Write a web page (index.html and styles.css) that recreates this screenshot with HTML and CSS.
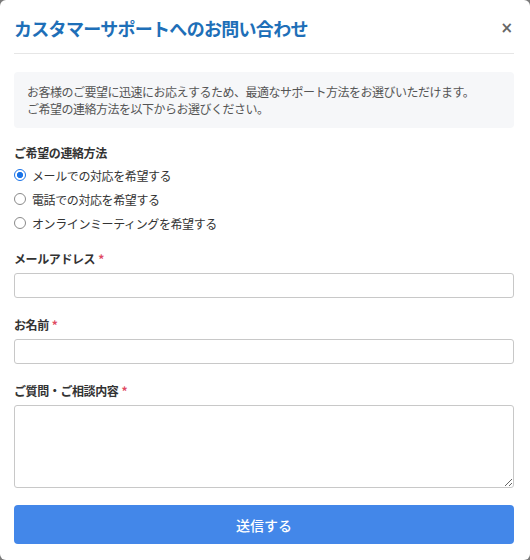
FILE: index.html
```html
<!DOCTYPE html>
<html lang="ja">
<head>
<meta charset="utf-8">
<title>カスタマーサポートへのお問い合わせ</title>
<link rel="stylesheet" href="styles.css">
</head>
<body>
<div class="modal">
  <div class="modal-header">
    <h1 class="modal-title">カスタマーサポートへのお問い合わせ</h1>
    <button class="close" type="button" aria-label="閉じる">×</button>
  </div>
  <div class="info">
    お客様のご要望に迅速にお応えするため、最適なサポート方法をお選びいただけます。<br>
    ご希望の連絡方法を以下からお選びください。
  </div>
  <form class="form">
    <fieldset class="group">
      <legend class="label">ご希望の連絡方法</legend>
      <label class="radio radio-first"><input type="radio" name="method" checked><span>メールでの対応を希望する</span></label>
      <label class="radio"><input type="radio" name="method"><span>電話での対応を希望する</span></label>
      <label class="radio"><input type="radio" name="method"><span>オンラインミーティングを希望する</span></label>
    </fieldset>
    <div class="field field-first">
      <label class="label">メールアドレス<span class="req">*</span></label>
      <input class="input" type="email">
    </div>
    <div class="field">
      <label class="label">お名前<span class="req">*</span></label>
      <input class="input" type="text">
    </div>
    <div class="field">
      <label class="label">ご質問・ご相談内容<span class="req">*</span></label>
      <textarea class="textarea"></textarea>
    </div>
    <button class="submit" type="button">送信する</button>
  </form>
</div>
</body>
</html>
```
FILE: styles.css
```css
html, body {
  margin: 0;
  padding: 0;
  background: #7a7a7a;
}
body {
  font-family: "Noto Sans CJK JP", "Noto Sans", sans-serif;
  color: #333;
}
.modal {
  box-sizing: border-box;
  width: 530px;
  height: 560px;
  background: #fff;
  border-radius: 6px;
  padding: 0 16px 0 14px;
  overflow: hidden;
}
.modal-header {
  display: flex;
  align-items: center;
  justify-content: space-between;
  padding: 15px 0 12px;
  border-bottom: 1px solid #e6e6e6;
}
.modal-title {
  margin: 0;
  font-size: 18px;
  line-height: 26px;
  font-weight: 700;
  color: #1e6fb8;
  letter-spacing: -0.7px;
}
.close {
  border: 0;
  background: none;
  padding: 0;
  margin-right: 1px;
  font-size: 15px;
  line-height: 20px;
  font-weight: 700;
  color: #666;
  font-family: "DejaVu Sans", sans-serif;
}
.info {
  margin-top: 18px;
  background: #f6f7f9;
  border-radius: 4px;
  padding: 11px 13px;
  font-size: 12px;
  line-height: 17px;
  color: #555;
  letter-spacing: -0.5px;
}
.form {
  display: flex;
  flex-direction: column;
  margin-top: 16px;
}
.group {
  border: 0;
  margin: 0;
  padding: 0;
  display: flex;
  flex-direction: column;
}
.label {
  display: block;
  padding: 0;
  font-size: 12px;
  line-height: 18px;
  font-weight: 700;
  color: #333;
  letter-spacing: -0.4px;
}
.req {
  color: #e04a62;
  margin-left: 3px;
}
.radio {
  display: flex;
  align-items: center;
  height: 24px;
  font-size: 12px;
  color: #333;
  letter-spacing: -0.4px;
}
.radio-first {
  margin-top: 1px;
}
.radio input {
  appearance: none;
  -webkit-appearance: none;
  box-sizing: border-box;
  width: 12px;
  height: 12px;
  margin: 0 6px 0 0;
  border: 1px solid #8a8a8a;
  border-radius: 50%;
  background: #fff;
}
.radio input:checked {
  border-color: #1a73e8;
  background: radial-gradient(circle, #1a73e8 0 2.8px, #fff 3.3px);
}
.field {
  display: flex;
  flex-direction: column;
  gap: 5px;
  margin-top: 18px;
}
.field-first {
  margin-top: 15px;
}
.input {
  box-sizing: border-box;
  height: 25px;
  border: 1px solid #c8c8c8;
  border-radius: 3px;
  margin: 0;
}
.textarea {
  box-sizing: border-box;
  height: 83px;
  border: 1px solid #c8c8c8;
  border-radius: 3px;
  margin: 0;
  resize: vertical;
}
.submit {
  margin-top: 17px;
  height: 39px;
  border: 0;
  border-radius: 4px;
  background: #4387e9;
  color: #fff;
  font-family: inherit;
  font-size: 14px;
  font-weight: 500;
}
```
